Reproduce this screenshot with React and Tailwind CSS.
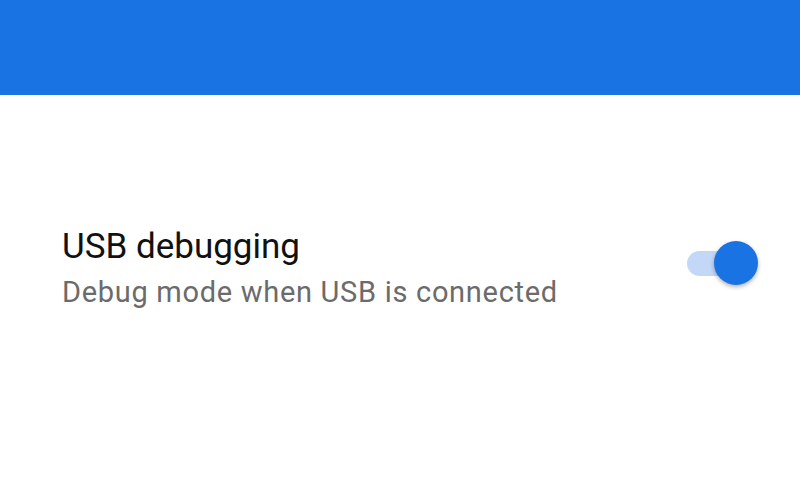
export default function App() {
  return (
    <div className="w-[800px] h-[500px] bg-white overflow-hidden" style={{ fontFamily: "Roboto, 'Noto Sans', sans-serif" }}>
      <div className="h-[95px] bg-[#1a73e3]" />
      <div className="flex items-start justify-between pl-[62px] pr-[42px] pt-[128px]">
        <div className="flex flex-col pt-[4px]">
          <div className="text-[35px] leading-[40px] text-[#111111]">USB debugging</div>
          <div className="text-[29px] leading-[34px] tracking-[0.7px] text-[#6b6b6b] mt-[8px]">Debug mode when USB is connected</div>
        </div>
        <div className="relative w-[72px] h-[44px] mt-[18px]">
          <div className="absolute left-[1px] top-[10px] w-[60px] h-[25px] rounded-full bg-[#c3d8f7]" />
          <div className="absolute right-0 top-0 w-[44px] h-[44px] rounded-full bg-[#1a73e3] shadow-[0_2px_4px_rgba(0,0,0,0.3)]" />
        </div>
      </div>
    </div>
  );
}
